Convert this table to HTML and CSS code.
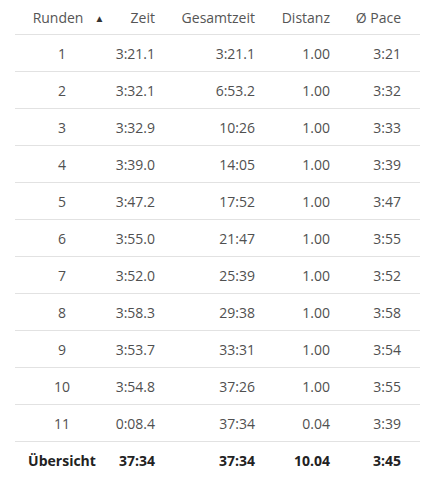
FILE: index.html
```html
<!DOCTYPE html>
<html lang="de">
<head>
<meta charset="utf-8">
<link rel="stylesheet" href="styles.css">
</head>
<body>
<table class="laps">
  <thead>
    <tr>
      <th class="c-lap sorted">Runden<span class="arrow">&#9650;</span></th>
      <th class="c-time">Zeit</th>
      <th class="c-total">Gesamtzeit</th>
      <th class="c-dist">Distanz</th>
      <th class="c-pace">Ø Pace</th>
    </tr>
  </thead>
  <tbody>
    <tr><td class="c-lap">1</td><td class="c-time">3:21.1</td><td class="c-total">3:21.1</td><td class="c-dist">1.00</td><td class="c-pace">3:21</td></tr>
    <tr><td class="c-lap">2</td><td class="c-time">3:32.1</td><td class="c-total">6:53.2</td><td class="c-dist">1.00</td><td class="c-pace">3:32</td></tr>
    <tr><td class="c-lap">3</td><td class="c-time">3:32.9</td><td class="c-total">10:26</td><td class="c-dist">1.00</td><td class="c-pace">3:33</td></tr>
    <tr><td class="c-lap">4</td><td class="c-time">3:39.0</td><td class="c-total">14:05</td><td class="c-dist">1.00</td><td class="c-pace">3:39</td></tr>
    <tr><td class="c-lap">5</td><td class="c-time">3:47.2</td><td class="c-total">17:52</td><td class="c-dist">1.00</td><td class="c-pace">3:47</td></tr>
    <tr><td class="c-lap">6</td><td class="c-time">3:55.0</td><td class="c-total">21:47</td><td class="c-dist">1.00</td><td class="c-pace">3:55</td></tr>
    <tr><td class="c-lap">7</td><td class="c-time">3:52.0</td><td class="c-total">25:39</td><td class="c-dist">1.00</td><td class="c-pace">3:52</td></tr>
    <tr><td class="c-lap">8</td><td class="c-time">3:58.3</td><td class="c-total">29:38</td><td class="c-dist">1.00</td><td class="c-pace">3:58</td></tr>
    <tr><td class="c-lap">9</td><td class="c-time">3:53.7</td><td class="c-total">33:31</td><td class="c-dist">1.00</td><td class="c-pace">3:54</td></tr>
    <tr><td class="c-lap">10</td><td class="c-time">3:54.8</td><td class="c-total">37:26</td><td class="c-dist">1.00</td><td class="c-pace">3:55</td></tr>
    <tr><td class="c-lap">11</td><td class="c-time">0:08.4</td><td class="c-total">37:34</td><td class="c-dist">0.04</td><td class="c-pace">3:39</td></tr>
  </tbody>
  <tfoot>
    <tr><td class="c-lap">Übersicht</td><td class="c-time">37:34</td><td class="c-total">37:34</td><td class="c-dist">10.04</td><td class="c-pace">3:45</td></tr>
  </tfoot>
</table>
</body>
</html>
```

FILE: styles.css
```css
html, body {
  margin: 0;
  padding: 0;
  background: #fff;
}
body {
  font-family: "Open Sans", "Noto Sans", sans-serif;
  font-size: 14px;
  color: #505050;
}
.laps {
  border-collapse: collapse;
  table-layout: fixed;
  width: 405px;
  margin-left: 15px;
}
.laps th,
.laps td {
  padding: 0;
  white-space: nowrap;
}
.laps th {
  font-weight: normal;
  color: #555;
  height: 34px;
  border-bottom: 1px solid #e2e2e2;
}
.laps td {
  height: 36px;
  border-bottom: 1px solid #e2e2e2;
}
.laps tfoot td {
  border-bottom: none;
  font-weight: bold;
  color: #222;
}
.c-lap { width: 94px; text-align: center; }
.c-time { width: 46px; text-align: right; }
.c-total { width: 100px; text-align: right; }
.c-dist { width: 75px; text-align: right; }
.laps .c-pace { width: 71px; text-align: right; padding-right: 19px; }
.laps th.sorted { padding-left: 13px; width: 81px; }
.arrow {
  font-size: 10px;
  margin-left: 11px;
  vertical-align: 1px;
  color: #333;
}
```
